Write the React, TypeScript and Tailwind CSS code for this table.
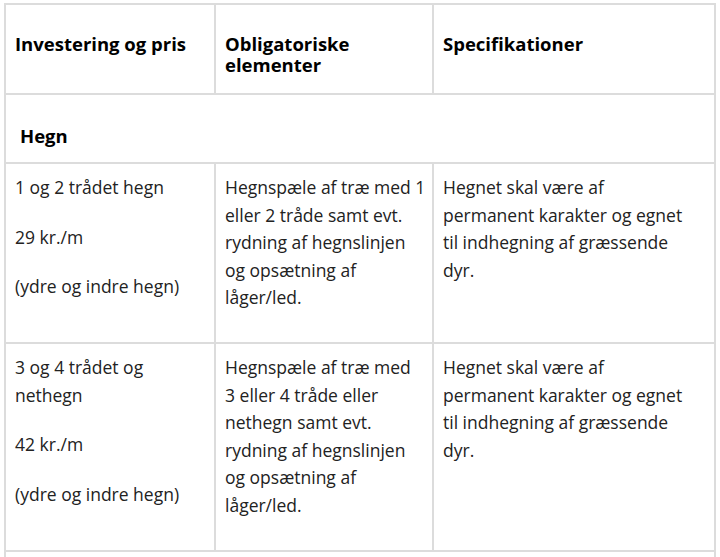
export default function App() {
  const cell = "border-2 border-[#dcdcdc] align-top"
  const head = `${cell} text-left font-bold text-black text-[18.5px] leading-[21px] pl-[9px] pr-2 pt-[28px]`
  return (
    <div className="bg-white pl-[4px] pt-[3px] pr-[6px] h-[557px] overflow-hidden font-['Open_Sans',sans-serif] text-[17.5px] text-[#222]">
      <table className="w-[710px] border-collapse table-fixed">
        <colgroup>
          <col className="w-[210px]" />
          <col className="w-[218px]" />
          <col className="w-[282px]" />
        </colgroup>
        <thead>
          <tr className="h-[90px]">
            <th className={head}>Investering og pris</th>
            <th className={head}>Obligatoriske elementer</th>
            <th className={head}>Specifikationer</th>
          </tr>
        </thead>
        <tbody className="leading-[27.5px]">
          <tr className="h-[69px]">
            <td colSpan={3} className={`${cell} pl-[14px] pt-[27px] font-bold text-black text-[18.5px]`}>Hegn</td>
          </tr>
          <tr className="h-[180px]">
            <td className={`${cell} pl-[9px] pr-2 pt-[10px]`}>
              <p>1 og 2 trådet hegn</p>
              <p className="mt-[22px]">29 kr./m</p>
              <p className="mt-[22px]">(ydre og indre hegn)</p>
            </td>
            <td className={`${cell} pl-[9px] pr-[6px] pt-[10px]`}>
              Hegnspæle af træ med 1 eller 2 tråde samt evt. rydning af hegnslinjen og opsætning af låger/led.
            </td>
            <td className={`${cell} pl-[9px] pr-[20px] pt-[10px]`}>
              Hegnet skal være af permanent karakter og egnet til indhegning af græssende dyr.
            </td>
          </tr>
          <tr className="h-[208px]">
            <td className={`${cell} pl-[9px] pr-2 pt-[10px]`}>
              <p>3 og 4 trådet og nethegn</p>
              <p className="mt-[22px]">42 kr./m</p>
              <p className="mt-[22px]">(ydre og indre hegn)</p>
            </td>
            <td className={`${cell} pl-[9px] pr-[14px] pt-[10px]`}>
              Hegnspæle af træ med 3 eller 4 tråde eller nethegn samt evt. rydning af hegnslinjen og opsætning af låger/led.
            </td>
            <td className={`${cell} pl-[9px] pr-[20px] pt-[10px]`}>
              Hegnet skal være af permanent karakter og egnet til indhegning af græssende dyr.
            </td>
          </tr>
          <tr className="h-[69px]">
            <td colSpan={3} className={`${cell} pl-[14px] pt-[12px]`}>&nbsp;</td>
          </tr>
        </tbody>
      </table>
    </div>
  )
}
